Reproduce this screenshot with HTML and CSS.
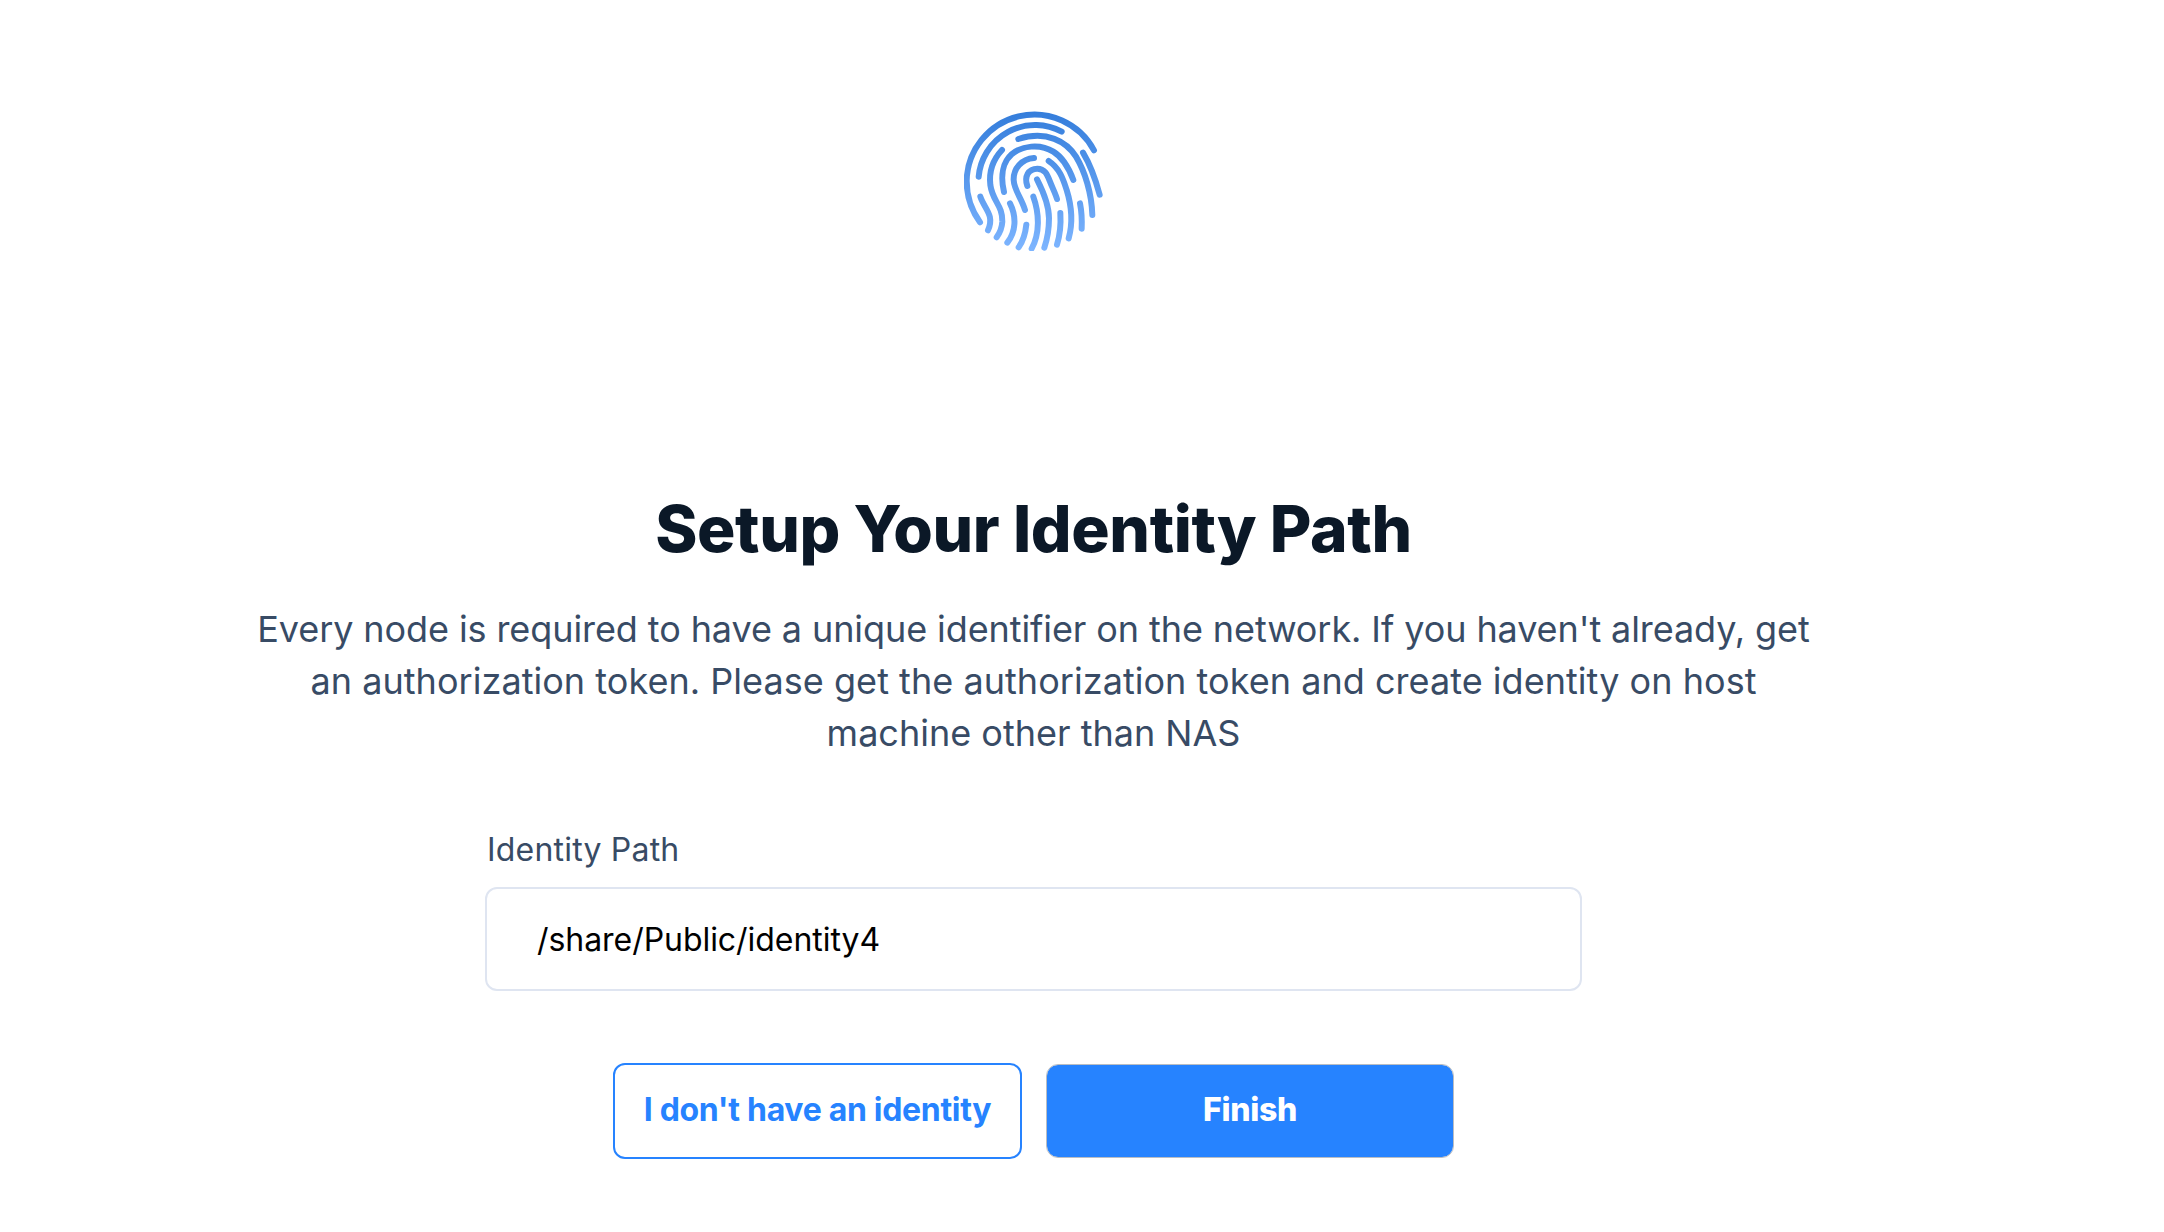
FILE: index.html
```html
<!DOCTYPE html>
<html lang="en">
<head>
<meta charset="utf-8">
<title>Setup Your Identity Path</title>
<link rel="stylesheet" href="styles.css">
</head>
<body>
<main class="setup">
  <svg class="fingerprint" viewBox="42 30 420 423" aria-hidden="true">
    <defs>
      <linearGradient id="ink" gradientUnits="userSpaceOnUse" x1="0" y1="35" x2="0" y2="450">
        <stop offset="0" stop-color="#347ddb"/>
        <stop offset="1" stop-color="#7db5ff"/>
      </linearGradient>
    </defs>
    <g fill="none" stroke="url(#ink)" stroke-width="18" stroke-linecap="round">
      <path d="M432 151A203 203 0 0 0 50 243C50 289 65 332 90 367"/>
      <path d="M335 95A170 170 0 0 0 86 230"/>
      <path d="M205 117C290 90 350 125 378 170C405 215 425 280 427 345"/>
      <path d="M156 150C125 183 117 220 121 255C128 305 158 315 157 365C156 382 150 398 140 412"/>
      <path d="M162 276C150 225 160 185 185 163C215 137 270 130 310 155C338 172 355 200 370 240"/>
      <path d="M252 174C215 177 190 205 191 240C192 270 215 295 225 330"/>
      <path d="M232 258C222 230 235 206 262 206C285 206 292 225 300 245C308 265 316 280 321 297"/>
      <path d="M296 183C330 205 340 240 350 270C364 315 370 365 356 415"/>
      <path d="M261 238C280 275 297 315 297 355C297 390 291 420 283 443"/>
      <path d="M250 290C268 340 270 400 245 446"/>
      <path d="M399 158C423 198 437 240 449 284"/>
      <path d="M91 290C102 325 135 345 114 391"/>
      <path d="M180 310C200 350 198 395 172 428"/>
      <path d="M229 374C226 402 219 424 206 442"/>
      <path d="M331 339C333 372 330 405 321 434"/>
      <path d="M390 310C395 335 396 360 395 386"/>
    </g>
  </svg>
  <h1 class="title">Setup Your Identity Path</h1>
  <p class="description"><span class="tight">Every node is required to have a unique identifier on the network. If you haven't already, get</span><br><span class="loose">an authorization token. Please get the authorization token and create identity on host</span><br>machine other than NAS</p>
  <div class="field">
    <label class="field-label" for="path">Identity Path</label>
    <input class="field-input" id="path" type="text" value="/share/Public/identity4" spellcheck="false">
  </div>
  <div class="actions">
    <button class="button button-outline" type="button">I don't have an identity</button>
    <button class="button button-primary" type="button">Finish</button>
  </div>
</main>
</body>
</html>
```
FILE: styles.css
```css
* {
  box-sizing: border-box;
}

body {
  margin: 0;
  background: #fff;
  font-family: Inter, sans-serif;
}

.setup {
  display: flex;
  flex-direction: column;
  align-items: center;
  width: 2067px;
  height: 1232px;
  padding-top: 110px;
  overflow: hidden;
}

.fingerprint {
  width: 140px;
  height: 141px;
}

.title {
  margin: 239px 0 0;
  color: #0b1827;
  font-size: 64px;
  font-weight: 800;
  letter-spacing: -0.38px;
  line-height: 78px;
  white-space: nowrap;
}

.description {
  margin: 35px 0 0;
  color: #384b65;
  font-size: 36px;
  line-height: 52px;
  text-align: center;
  white-space: nowrap;
}

.tight {
  letter-spacing: -0.09px;
}

.loose {
  letter-spacing: 0.04px;
}

.field {
  display: flex;
  flex-direction: column;
  width: 1097px;
  margin-top: 71px;
}

.field-label {
  padding-left: 2px;
  color: #384b65;
  font-size: 32px;
  letter-spacing: 0.2px;
  line-height: 40px;
}

.field-input {
  height: 104px;
  margin-top: 17px;
  padding: 0 50px;
  border: 2px solid #dfe5f1;
  border-radius: 12px;
  outline: none;
  background: transparent;
  color: #000;
  font: 32px Inter, sans-serif;
  letter-spacing: -0.05px;
}

.actions {
  display: flex;
  align-items: center;
  gap: 24px;
  margin-top: 72px;
}

.button {
  width: 409px;
  height: 96px;
  padding: 0 0 4px;
  border-radius: 12px;
  font: 700 32px Inter, sans-serif;
  white-space: nowrap;
}

.button-outline {
  border: 2px solid #2683ff;
  background: transparent;
  color: #2683ff;
  letter-spacing: -0.31px;
}

.button-primary {
  width: 408px;
  height: 94px;
  border: 1px solid #b9bdc3;
  background: #2683ff padding-box;
  color: #fff;
  font-weight: 800;
  letter-spacing: -0.3px;
}
```
